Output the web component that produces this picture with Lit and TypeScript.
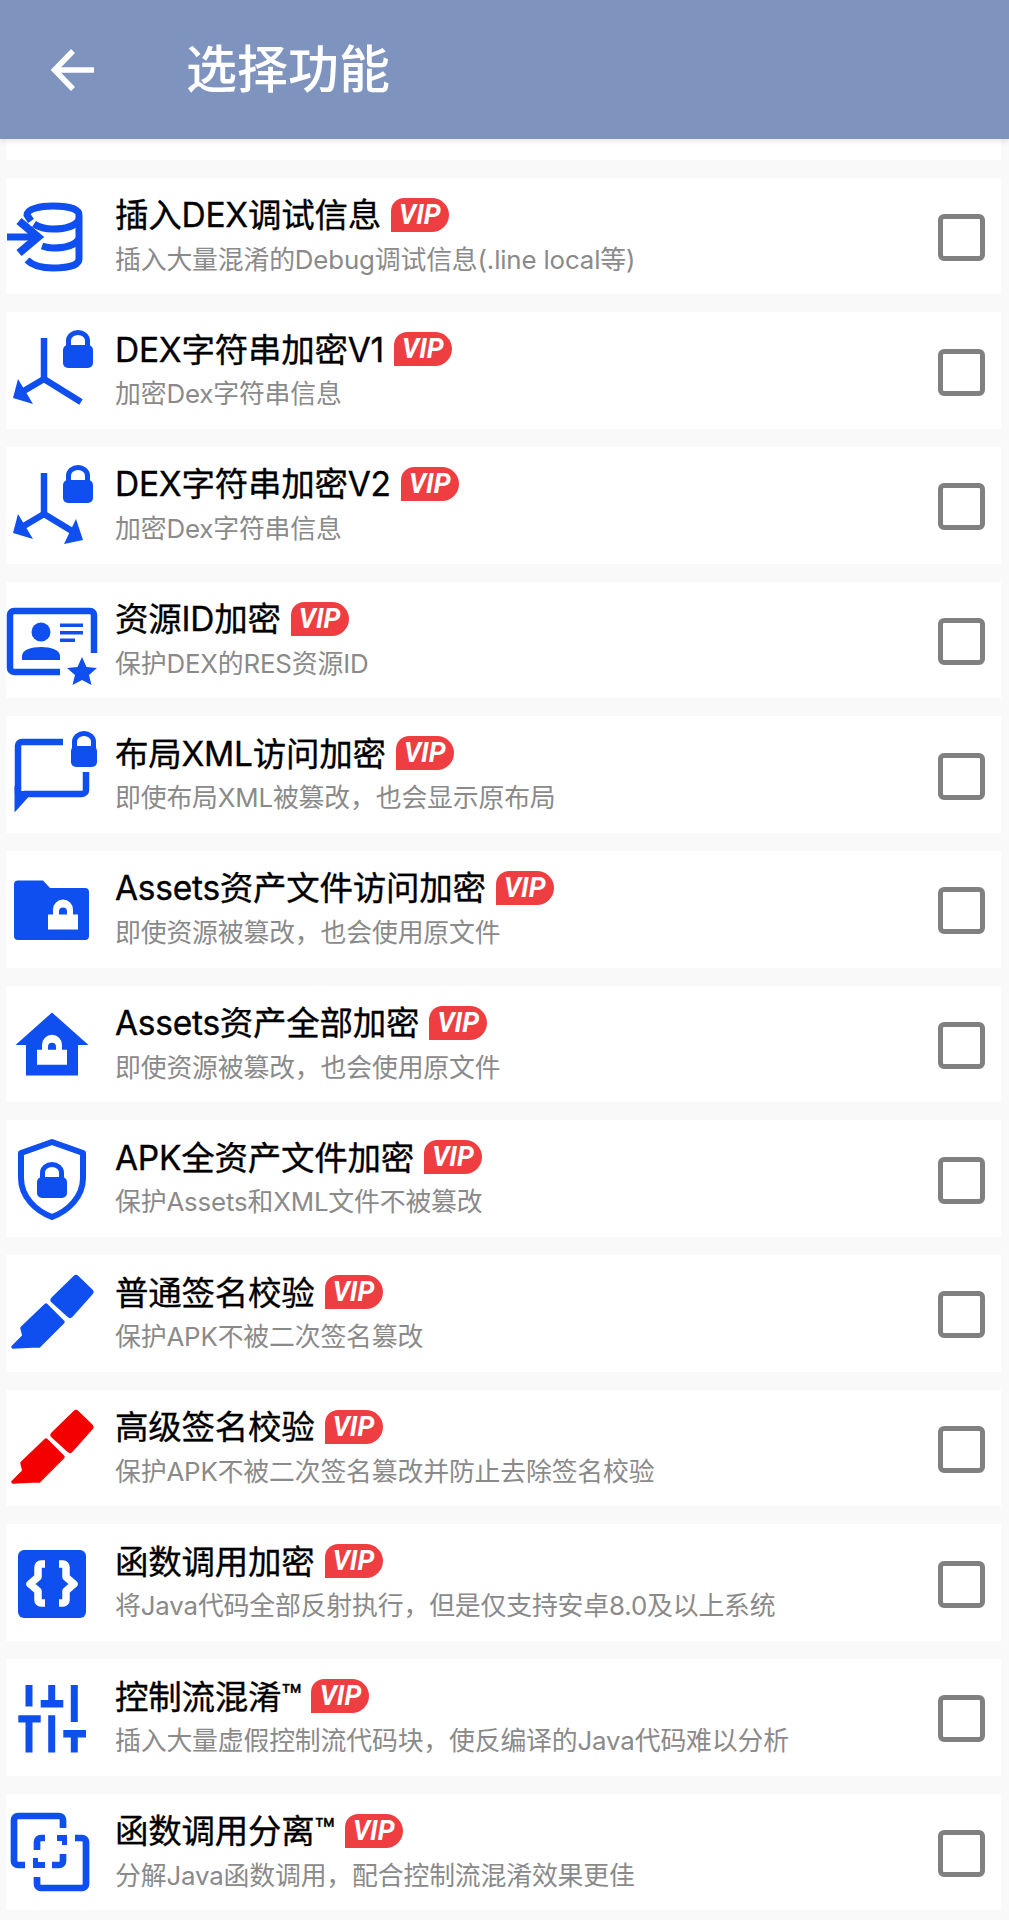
import { LitElement, html, svg, css } from 'lit';
import { customElement } from 'lit/decorators.js';

const BLUE = '#0f4ff0';

const lock = (cx: number, top: number, w: number, bodyH: number, fill = BLUE) => svg`
  <rect x=${cx - w / 2} y=${top + 15} width=${w} height=${bodyH} rx="5" fill=${fill}></rect>
  <path d="M${cx - 9.5} ${top + 17}v-6.5a9.5 8 0 0 1 19 0v6.5" fill="none" stroke=${fill} stroke-width="5"></path>`;

// white padlock knocked out of a filled shape (folder, house)
const whiteLock = (cx: number, top: number) => svg`
  <path d="M${cx - 15} ${top + 15}h5v-5a10 10 0 0 1 20 0v5h5v15h-30z" fill="#fff"></path>
  <path d="M${cx - 4} ${top + 15}v-3a4 4 0 0 1 8 0v3z" fill=${BLUE}></path>`;

const marker = (color: string) => svg`
  <g fill=${color} stroke=${color} stroke-linejoin="round">
    <path d="M54 45 76 23.500 90 37 70 59.500z" stroke-width="7"></path>
    <path d="M46 50 63 67 39 91H32L13 92 24 81 22 73z" stroke-width="3.500"></path>
  </g>`;

const forkArms = svg`
  <g stroke=${BLUE} stroke-width="6.5" fill="none">
    <path d="M44 26V67"></path>
  </g>`;

const icons: Record<string, unknown> = {
  db: svg`
    <g fill="none" stroke=${BLUE} stroke-width="7">
      <path d="M31 43 27 37C27 31 40 28 53 28C68 28 79 31 79 37V81C79 88 65 90 53 90C42 90 32 87 27 82"></path>
      <path d="M34 46C40 50 46 51 53 51C65 51 75 48 79 42"></path>
      <path d="M42 68C45 69 49 70 53 70C65 70 75 67 79 61"></path>
      <path d="M7 59H35" stroke-width="7"></path>
      <path d="M19 43 38 59 19 75" stroke-width="8"></path>
    </g>`,
  fork1: svg`
    ${forkArms}
    <path d="M44 67 22 80M44 67 81 90" stroke=${BLUE} stroke-width="6.5" fill="none"></path>
    <path d="M18 67 13 86 33 92z" fill=${BLUE}></path>
    ${lock(78, 18, 30, 23)}`,
  fork2: svg`
    ${forkArms}
    <path d="M44 67 22 80M44 67 72 84" stroke=${BLUE} stroke-width="6.5" fill="none"></path>
    <path d="M18 67 13 86 33 92z" fill=${BLUE}></path>
    <path d="M76 72 83 93 64 97z" fill=${BLUE}></path>
    ${lock(78, 18, 30, 23)}`,
  idcard: svg`
    <path d="M94 71V33a4 4 0 0 0-4-4H14a4 4 0 0 0-4 4V86a4 4 0 0 0 4 4H60" fill="none" stroke=${BLUE} stroke-width="6.5"></path>
    <circle cx="41" cy="50" r="9.5" fill=${BLUE}></circle>
    <path d="M22 78V74C22 68 31 65 41 65S60 68 60 74V78z" fill=${BLUE}></path>
    <path d="M60 41.5H83V45H60zM60 49H83V52.5H60zM60 56.5H75V60H60z" fill=${BLUE}></path>
    <path d="M82 75 86.5 85 97 86 89 93 91.5 103 82 98 72.500 103 75 93 67 86 77.500 85z" fill=${BLUE}></path>`,
  chat: svg`
    <path d="M63 26H22a4 4 0 0 0-4 4V78M86 56V74a4 4 0 0 1-4 4H24" fill="none" stroke=${BLUE} stroke-width="6.500"></path>
    <path d="M14.500 70H21V75H28V81.500L14.500 96.500z" fill=${BLUE}></path>
    ${lock(84, 15, 26, 21)}`,
  folder: svg`
    <path d="M18 29.500H43L50 37H85a4 4 0 0 1 4 4V85a4 4 0 0 1-4 4H18a4 4 0 0 1-4-4V33.500a4 4 0 0 1 4-4z" fill=${BLUE}></path>
    ${whiteLock(63, 48.500)}`,
  house: svg`
    <path d="M52 26.500 88.500 59H78V89.500H26V59H15.500z" fill=${BLUE}></path>
    ${whiteLock(52, 48.800)}`,
  shield: svg`
    <path d="M52 22 21 33V58C21 77 36 91 52 97C68 91 83 77 83 58V33z" fill="none" stroke=${BLUE} stroke-width="6" stroke-linejoin="round"></path>
    ${lock(52, 42, 30, 21)}`,
  markerBlue: marker(BLUE),
  markerRed: marker('#f40000'),
  braces: svg`
    <rect x="18" y="26" width="68" height="68" rx="6" fill=${BLUE}></rect>
    <g fill="none" stroke="#fff" stroke-width="7.500" stroke-linejoin="round">
      <path d="M45 40H41a3 3 0 0 0-3 3V53L30 60 38 67V76a3 3 0 0 0 3 3H45"></path>
      <path d="M59 40H63a3 3 0 0 1 3 3V53L74 60 66 67V76a3 3 0 0 1-3 3H59"></path>
    </g>`,
  sliders: svg`
    <path d="M25.500 26H32.500V47.500H25.500zM18.300 56.300H40.700V63.600H32.500V93.600H25.500V63.600H18.300zM48.200 26H55.200V41H63.300V48.600H40.700V41H48.200zM48.200 56.300H55.200V93.600H48.200zM70.800 26H77.800V63H70.800zM63.300 71H86V78.600H77.800V93.600H70.800V78.600H63.300z" fill=${BLUE}></path>`,
  split: svg`
    <g fill="none" stroke=${BLUE} stroke-width="6.700">
      <path d="M63 34V26a4 4 0 0 0-4-4H18a4 4 0 0 0-4 4V67a4 4 0 0 0 4 4H25"></path>
      <path d="M75 44H82a4 4 0 0 1 4 4V90a4 4 0 0 1-4 4H41a4 4 0 0 1-4-4V83"></path>
      <path d="M37 56V48a4 4 0 0 1 4-4H45"></path>
      <path d="M52 71H59a4 4 0 0 0 4-4V60"></path>
    </g>
    <path d="M57 41H67V51H62V47H57zM33 64H38V68H45V74H33z" fill=${BLUE}></path>`,
};

const items = [
  { icon: 'db', title: '插入DEX调试信息', sub: '插入大量混淆的Debug调试信息(.line local等)' },
  { icon: 'fork1', title: 'DEX字符串加密V1', sub: '加密Dex字符串信息' },
  { icon: 'fork2', title: 'DEX字符串加密V2', sub: '加密Dex字符串信息' },
  { icon: 'idcard', title: '资源ID加密', sub: '保护DEX的RES资源ID' },
  { icon: 'chat', title: '布局XML访问加密', sub: '即使布局XML被篡改，也会显示原布局' },
  { icon: 'folder', title: 'Assets资产文件访问加密', sub: '即使资源被篡改，也会使用原文件' },
  { icon: 'house', title: 'Assets资产全部加密', sub: '即使资源被篡改，也会使用原文件' },
  { icon: 'shield', title: 'APK全资产文件加密', sub: '保护Assets和XML文件不被篡改' },
  { icon: 'markerBlue', title: '普通签名校验', sub: '保护APK不被二次签名篡改' },
  { icon: 'markerRed', title: '高级签名校验', sub: '保护APK不被二次签名篡改并防止去除签名校验' },
  { icon: 'braces', title: '函数调用加密', sub: '将Java代码全部反射执行，但是仅支持安卓8.0及以上系统' },
  { icon: 'sliders', title: '控制流混淆™', sub: '插入大量虚假控制流代码块，使反编译的Java代码难以分析' },
  { icon: 'split', title: '函数调用分离™', sub: '分解Java函数调用，配合控制流混淆效果更佳' },
];

@customElement('app-root')
export class AppRoot extends LitElement {
  static styles = css`
    :host {
      display: block;
      width: 1009px;
      height: 1920px;
      overflow: hidden;
      background: #f9f9f9;
      font-family: Inter, 'Noto Sans CJK SC', sans-serif;
    }

    .bar {
      position: relative;
      display: flex;
      align-items: center;
      height: 139px;
      background: #7f93bf;
      box-shadow: 0 2px 6px rgba(0, 0, 0, 0.1);
    }

    .back {
      width: 46px;
      height: 46px;
      margin-left: 50px;
    }

    .bar h1 {
      margin: 0 0 0 90px;
      font-size: 51px;
      line-height: 60px;
      font-weight: 500;
      color: #fff;
    }

    .list {
      display: flex;
      flex-direction: column;
      gap: 18px;
      padding: 0 8px 0 6px;
    }

    .stub {
      height: 20.5px;
      background: #fff;
    }

    .card {
      display: flex;
      height: 116.7px;
      background: #fff;
    }

    .icon {
      flex: none;
      width: 109px;
      height: 116.7px;
    }

    .text {
      flex: 1;
      display: flex;
      flex-direction: column;
      gap: 7px;
      padding-top: 13px;
    }

    .title {
      display: flex;
      align-items: center;
      gap: 10px;
      height: 44px;
      font-size: 33.5px;
      letter-spacing: -0.25px;
      font-weight: 400;
      color: #000;
      -webkit-text-stroke: 0.35px #000;
    }

    .vip {
      display: flex;
      align-items: center;
      justify-content: center;
      width: 58px;
      height: 34px;
      margin-top: 4px;
      background: #ef3e42;
      border-radius: 14px 18px 18px 0;
      color: #fff;
      font-family: Roboto, sans-serif;
      font-size: 27px;
      font-style: italic;
      font-weight: 700;
      letter-spacing: 0;
      -webkit-text-stroke: 0;
    }

    .sub {
      height: 36px;
      line-height: 36px;
      font-size: 25.85px;
      letter-spacing: -0.15px;
      color: #8a8a8a;
    }

    .check {
      flex: none;
      align-self: center;
      box-sizing: border-box;
      width: 47px;
      height: 47px;
      margin: 3px 16px 0 0;
      border: 5px solid #808080;
      border-radius: 6px;
    }
  `;

  render() {
    return html`
      <header class="bar">
        <svg class="back" viewBox="0 0 46 46" fill="none" stroke="#fff" stroke-width="5.500">
          <path d="M44 23H5M23 4 4.500 23 23 42"></path>
        </svg>
        <h1>选择功能</h1>
      </header>
      <div class="list">
        <div class="stub"></div>
        ${items.map(
          (item) => html`
            <div class="card">
              <svg class="icon" viewBox="6 0 109 116.700">${icons[item.icon]}</svg>
              <div class="text">
                <div class="title"><span>${item.title}</span><span class="vip">VIP</span></div>
                <div class="sub">${item.sub}</div>
              </div>
              <div class="check"></div>
            </div>
          `
        )}
      </div>
    `;
  }
}
